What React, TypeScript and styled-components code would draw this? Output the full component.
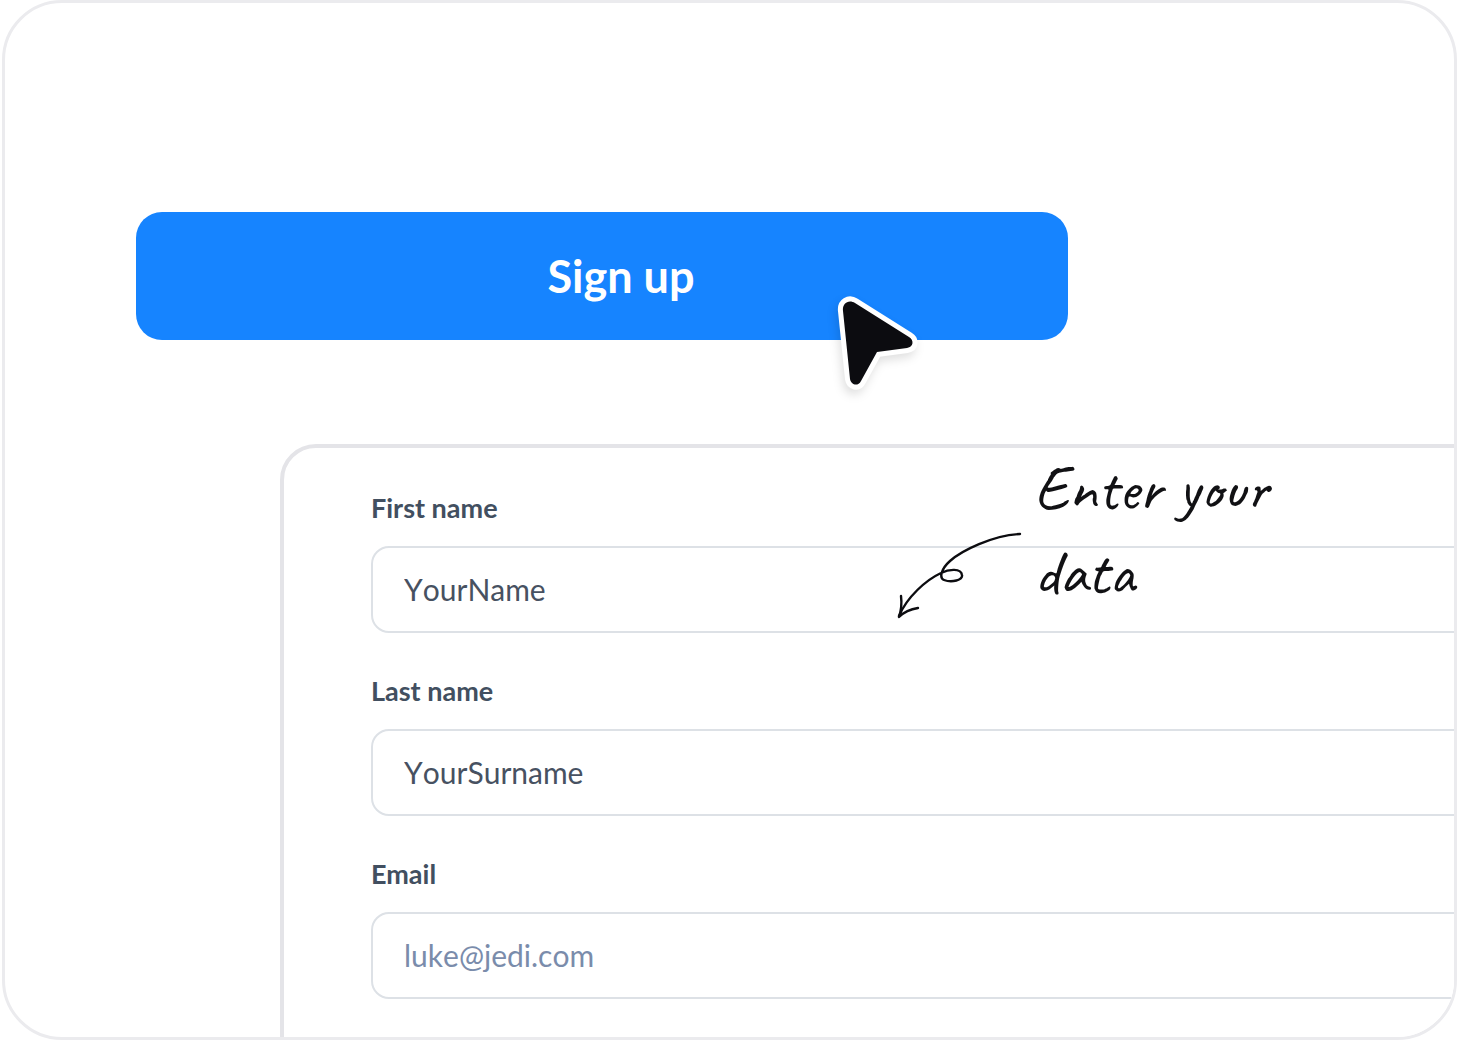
import React from "react";
import styled, { createGlobalStyle } from "styled-components";

const GlobalStyle = createGlobalStyle`
  *, *::before, *::after { box-sizing: border-box; }
  body {
    margin: 0;
    background: #fff;
    font-family: Lato, "Open Sans", sans-serif;
  }
`;

const Frame = styled.main`
  display: flex;
  flex-direction: column;
  gap: 104px;
  height: 100vh;
  margin-left: 2px;
  padding-top: 209px;
  overflow: hidden;
  border: 3px solid #ebebee;
  border-radius: 60px;
`;

const Action = styled.div`
  position: relative;
  width: 932px;
  max-width: 80%;
  margin-left: 131px;
`;

const SignUpButton = styled.button`
  display: block;
  width: 100%;
  height: 128px;
  padding: 0 0 0 38px;
  border: 0;
  border-radius: 26px;
  background: #1684ff;
  color: #fff;
  font: 700 45px/56px Lato, sans-serif;
  text-align: center;
  cursor: pointer;
`;

const Pointer = styled.svg`
  position: absolute;
  top: 78px;
  right: 138px;
  width: 100px;
  height: 110px;
  overflow: visible;
  filter: drop-shadow(-2px 5px 5px rgba(0, 0, 0, 0.12));
  pointer-events: none;
`;

const Card = styled.form`
  position: relative;
  display: flex;
  flex: 1 0 auto;
  flex-direction: column;
  gap: 42px;
  margin: 0 -48px -80px 275px;
  padding: 44px 0 120px 87px;
  border: 4px solid #e4e4e8;
  border-radius: 36px;
  background: #fff;
`;

const Field = styled.div`
  display: flex;
  flex-direction: column;
  gap: 22px;
`;

const Label = styled.label`
  color: #424f60;
  font-size: 27px;
  font-weight: 700;
  line-height: 32px;
`;

const Input = styled.input`
  width: 100%;
  height: 87px;
  padding: 0 31px 2px;
  border: 2px solid #dde1e6;
  border-radius: 18px;
  outline: 0;
  background: #fff;
  color: #475161;
  font: 400 30px/40px Lato, sans-serif;
  font-kerning: none;

  &::placeholder {
    color: #7a8cab;
    opacity: 1;
  }
`;

const Note = styled.div`
  position: absolute;
  top: -2px;
  left: 606px;
  display: flex;
  align-items: flex-start;
  gap: 4px;
  pointer-events: none;
`;

const NoteArrow = styled.svg`
  flex: none;
  width: 140px;
  height: 100px;
  margin-top: 79px;
`;

const NoteText = styled.p`
  width: 260px;
  margin: 0;
  color: #111114;
  font: 500 64px/84px Caveat, Lato, cursive;
`;

const fields = [
  { id: "first-name", label: "First name", type: "text", value: "YourName" },
  { id: "last-name", label: "Last name", type: "text", value: "YourSurname" },
  { id: "email", label: "Email", type: "email", placeholder: "luke@jedi.com" },
];

const pointerShape =
  "M13 21C12 13 19 9 25 13L79 47C84 50 84 57 77 58L47 62L31 91C28 97 21 95 20 89Z";

export default function App() {
  return (
    <>
      <GlobalStyle />
      <Frame>
        <Action>
          <SignUpButton type="button">Sign up</SignUpButton>
          <Pointer viewBox="0 0 100 110" aria-hidden="true">
            <path d={pointerShape} fill="#fff" stroke="#fff" strokeWidth="10" strokeLinejoin="round" />
            <path d={pointerShape} fill="#0c0c10" />
          </Pointer>
        </Action>
        <Card>
          {fields.map((field) => (
            <Field key={field.id}>
              <Label htmlFor={field.id}>{field.label}</Label>
              <Input
                id={field.id}
                type={field.type}
                defaultValue={field.value}
                placeholder={field.placeholder}
              />
            </Field>
          ))}
          <Note>
            <NoteArrow
              viewBox="0 0 140 100"
              fill="none"
              stroke="#0c0c10"
              strokeWidth="2.4"
              strokeLinecap="round"
              strokeLinejoin="round"
              aria-hidden="true"
            >
              <path d="M130 9C103 10 71 26 60 36C51 44 49 53 54 55C62 58 73 55 72 50C71 43 59 44 51 48C36 55 17 72 9 91" />
              <path d="M11 71C12 79 11 86 9 92C14 87 21 84 28 83" />
            </NoteArrow>
            <NoteText>Enter your data</NoteText>
          </Note>
        </Card>
      </Frame>
    </>
  );
}
